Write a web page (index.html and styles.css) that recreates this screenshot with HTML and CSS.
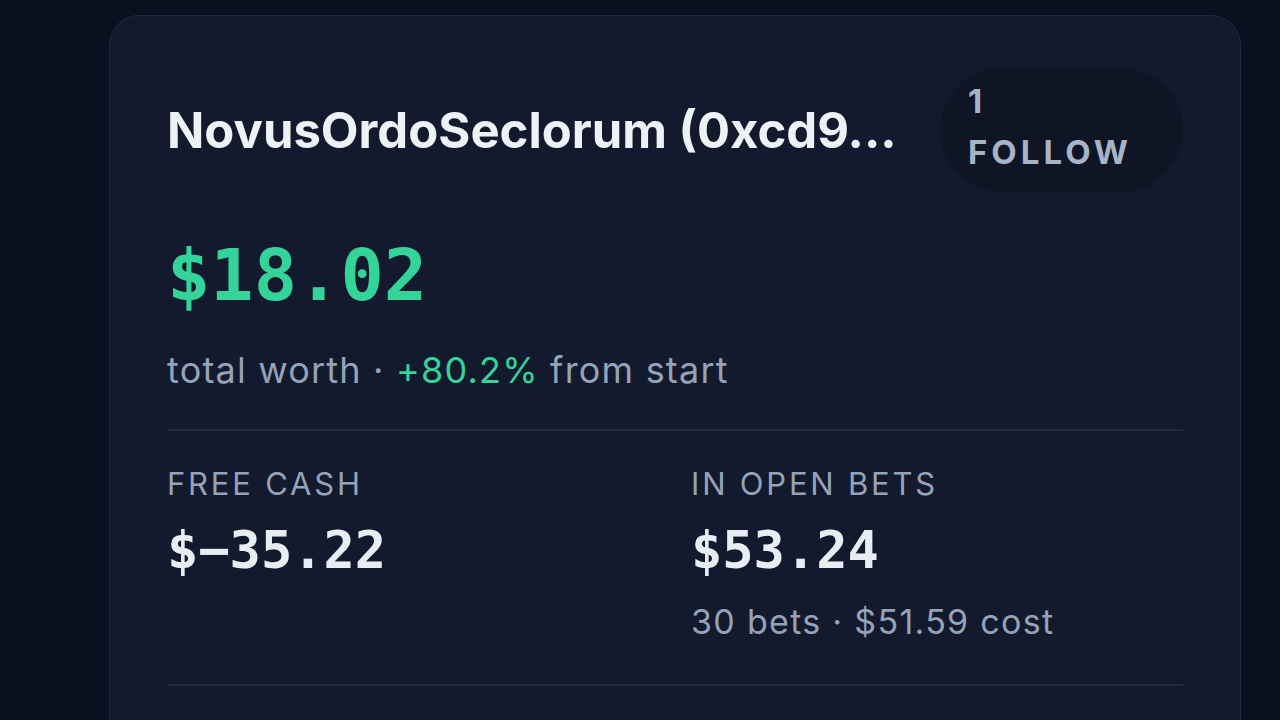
FILE: index.html
```html
<!DOCTYPE html>
<html>
<head>
	<title>portfolio</title>
	<link rel="stylesheet" href="styles.css">
</head>
<body>
<div class="card">
	<div class="head">
		<h1 class="name">NovusOrdoSeclorum (0xcd9...</h1>
		<button class="follow">1<br>FOLLOW</button>
	</div>
	<div class="worth">$18.02</div>
	<p class="sub">total worth · <span class="up">+80.2%</span> from start</p>
	<div class="stats">
		<div class="stat">
			<div class="label">FREE CASH</div>
			<div class="value">$&minus;35.22</div>
		</div>
		<div class="stat">
			<div class="label">IN OPEN BETS</div>
			<div class="value">$53.24</div>
			<div class="note">30 bets · $51.59 cost</div>
		</div>
	</div>
</div>
</body>
</html>
```
FILE: styles.css
```css
body{
	margin: 0;
	background: #0b1020;
	font-family: "Inter", "Liberation Sans", sans-serif;
	height: 720px;
	overflow: hidden;
}
.card{
	margin: 15px 0 0 109px;
	width: 1016px;
	height: 800px;
	padding: 52px 57px 0;
	background: #131a2d;
	border: 1px solid #212a3d;
	border-radius: 30px;
}
.head{
	display: flex;
	align-items: center;
	justify-content: space-between;
}
.name{
	margin: 0;
	color: #eef1f6;
	font-size: 49px;
	font-weight: 700;
	white-space: nowrap;
}
.follow{
	width: 243px;
	height: 124px;
	padding: 7px 28px 13px;
	border: none;
	border-radius: 62px;
	background: #0f1525;
	color: #a7b3c6;
	font-family: inherit;
	font-size: 33px;
	font-weight: 700;
	letter-spacing: 4px;
	line-height: 51px;
	text-align: left;
}
.worth{
	margin-top: 47px;
	color: #34d399;
	font-family: "DejaVu Sans Mono", monospace;
	font-weight: 700;
	font-size: 72px;
	line-height: 1;
}
.sub{
	margin: 37px 0 0;
	color: #94a3b8;
	font-size: 36px;
	letter-spacing: 1.2px;
	line-height: 44px;
}
.up{
	color: #34d399;
}
.stats{
	display: grid;
	grid-template-columns: 1fr 1fr;
	gap: 32px;
	margin-top: 37px;
	padding: 33px 0 40px;
	border-top: 2px solid #222b3e;
	border-bottom: 2px solid #222b3e;
}
.label{
	color: #94a3b8;
	font-size: 31px;
	line-height: 40px;
	letter-spacing: 2.8px;
}
.value{
	margin-top: 20px;
	color: #e8edf4;
	font-family: "DejaVu Sans Mono", monospace;
	font-weight: 700;
	font-size: 52px;
	line-height: 1;
}
.note{
	margin-top: 24px;
	color: #94a3b8;
	font-size: 34px;
	letter-spacing: 1.3px;
	line-height: 44px;
}
```
